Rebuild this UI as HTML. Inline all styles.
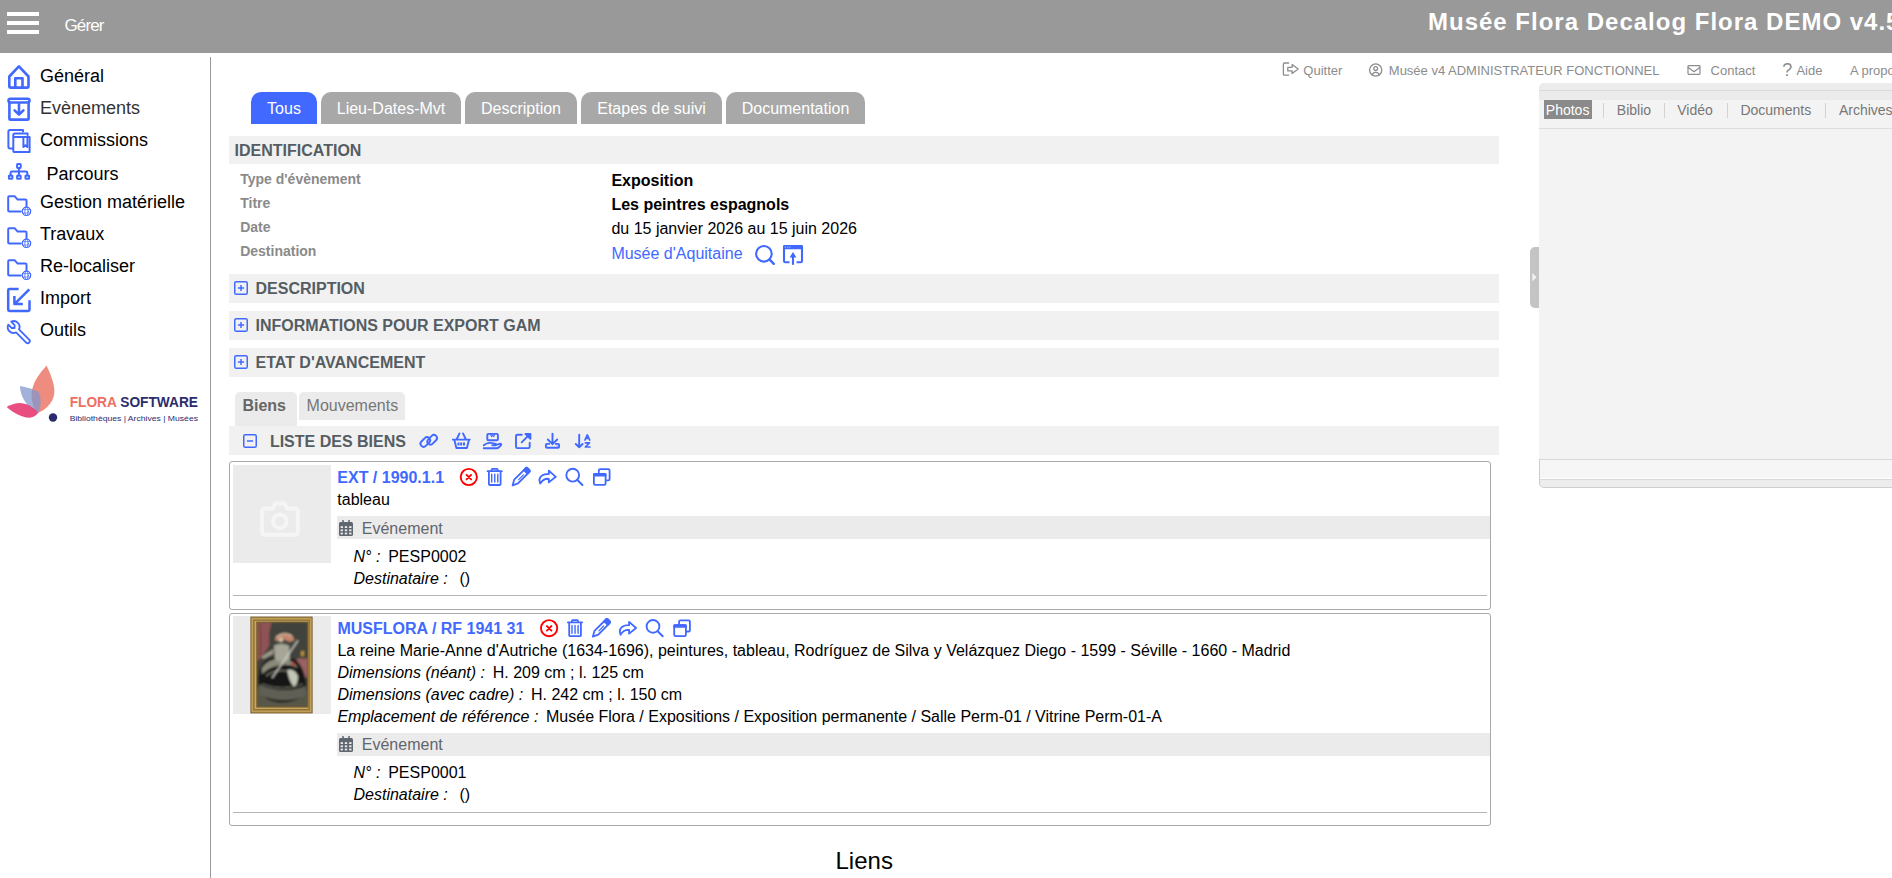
<!DOCTYPE html>
<html><head><meta charset="utf-8"><title>Flora</title><style>
html,body{margin:0;padding:0;}
body{width:1892px;height:878px;overflow:hidden;position:relative;background:#fff;font-family:"Liberation Sans",sans-serif;}
.t{position:absolute;line-height:1;white-space:pre;}
.r{position:absolute;}
svg.ov{position:absolute;left:0;top:0;width:1892px;height:878px;overflow:visible;}
</style></head><body>
<div class="r" style="left:0px;top:0px;width:1892px;height:53px;background:#999999;"></div>
<div class="r" style="left:7px;top:12px;width:32px;height:4px;background:#fff;"></div>
<div class="r" style="left:7px;top:21px;width:32px;height:4px;background:#fff;"></div>
<div class="r" style="left:7px;top:30px;width:32px;height:4px;background:#fff;"></div>
<div class="t" style="left:64.50px;top:16.71px;font-size:17px;color:#fff;font-weight:normal;font-style:normal;letter-spacing:-0.9px;">Gérer</div>
<div class="t" style="left:1428.00px;top:10.48px;font-size:24px;color:#fff;font-weight:bold;font-style:normal;letter-spacing:1px;">Musée Flora Decalog Flora DEMO v4.5</div>
<div class="r" style="left:210px;top:57px;width:1px;height:821px;background:#9a9a9a;"></div>
<div class="t" style="left:40.00px;top:67.36px;font-size:18px;color:#000;font-weight:normal;font-style:normal;">Général</div>
<div class="t" style="left:40.00px;top:99.46px;font-size:18px;color:#333;font-weight:normal;font-style:normal;">Evènements</div>
<div class="t" style="left:40.00px;top:131.36px;font-size:18px;color:#000;font-weight:normal;font-style:normal;">Commissions</div>
<div class="t" style="left:46.50px;top:164.76px;font-size:18px;color:#000;font-weight:normal;font-style:normal;">Parcours</div>
<div class="t" style="left:40.00px;top:193.36px;font-size:18px;color:#000;font-weight:normal;font-style:normal;">Gestion matérielle</div>
<div class="t" style="left:40.00px;top:225.16px;font-size:18px;color:#000;font-weight:normal;font-style:normal;">Travaux</div>
<div class="t" style="left:40.00px;top:257.06px;font-size:18px;color:#000;font-weight:normal;font-style:normal;">Re-localiser</div>
<div class="t" style="left:40.00px;top:288.96px;font-size:18px;color:#000;font-weight:normal;font-style:normal;">Import</div>
<div class="t" style="left:40.00px;top:320.86px;font-size:18px;color:#000;font-weight:normal;font-style:normal;">Outils</div>
<div class="t" style="left:1303.30px;top:63.80px;font-size:13px;color:#8c8c8c;font-weight:normal;font-style:normal;">Quitter</div>
<div class="t" style="left:1388.80px;top:63.80px;font-size:13px;color:#8c8c8c;font-weight:normal;font-style:normal;">Musée v4 ADMINISTRATEUR FONCTIONNEL</div>
<div class="t" style="left:1710.60px;top:63.80px;font-size:13px;color:#8c8c8c;font-weight:normal;font-style:normal;">Contact</div>
<div class="t" style="left:1782.30px;top:60.86px;font-size:18px;color:#8c8c8c;font-weight:normal;font-style:normal;">?</div>
<div class="t" style="left:1796.40px;top:63.80px;font-size:13px;color:#8c8c8c;font-weight:normal;font-style:normal;">Aide</div>
<div class="t" style="left:1850.00px;top:63.80px;font-size:13px;color:#8c8c8c;font-weight:normal;font-style:normal;">A propos</div>
<div class="r" style="left:1539px;top:83px;width:363px;height:376px;background:#f3f3f3;border-radius:5px 0 0 0;overflow:hidden;"><div class="r" style="left:0;top:0;width:100%;height:7px;background:#ececec;"></div><div class="r" style="left:0;top:7px;width:100%;height:1px;background:#dadada;"></div><div class="r" style="left:0;top:8px;width:100%;height:9px;background:#ebebeb;"></div><div class="r" style="left:0;top:45px;width:100%;height:1px;background:#dedede;"></div></div>
<div class="r" style="left:1539px;top:459px;width:400px;height:27px;border-left:1px solid #cdcdcd;border-top:1px solid #d8d8d8;border-bottom:1px solid #cfcfcf;border-bottom-left-radius:5px;background:#ededed;overflow:hidden;"><div class="r" style="left:0;top:0;width:100%;height:18px;background:#f6f6f6;"></div><div class="r" style="left:0;top:18px;width:100%;height:1px;background:#fff;"></div><div class="r" style="left:0;top:19px;width:100%;height:1px;background:#d9d9d9;"></div></div>
<div class="r" style="left:1530px;top:247px;width:9px;height:61px;background:#c4c4c4;border-radius:5px 0 0 5px;"></div>
<svg class="ov"><path d="M1532.3 273 L1536.6 277.2 L1532.3 281.4 Z" fill="#f2f2f2"/></svg>
<div class="r" style="left:1544px;top:100px;width:48px;height:19px;background:#8a8a8a;"></div>
<div class="t" style="left:1545.80px;top:103.25px;font-size:14px;color:#fff;font-weight:normal;font-style:normal;">Photos</div>
<div class="r" style="left:1603px;top:103px;width:1px;height:15px;background:#d2d2d2;"></div>
<div class="r" style="left:1664px;top:103px;width:1px;height:15px;background:#d2d2d2;"></div>
<div class="r" style="left:1727px;top:103px;width:1px;height:15px;background:#d2d2d2;"></div>
<div class="r" style="left:1825px;top:103px;width:1px;height:15px;background:#d2d2d2;"></div>
<div class="t" style="left:1616.80px;top:103.25px;font-size:14px;color:#777;font-weight:normal;font-style:normal;">Biblio</div>
<div class="t" style="left:1677.20px;top:103.25px;font-size:14px;color:#777;font-weight:normal;font-style:normal;">Vidéo</div>
<div class="t" style="left:1740.40px;top:103.25px;font-size:14px;color:#777;font-weight:normal;font-style:normal;">Documents</div>
<div class="t" style="left:1838.90px;top:103.25px;font-size:14px;color:#777;font-weight:normal;font-style:normal;">Archives</div>
<div class="r" style="left:251px;top:92px;width:66px;height:31px;padding-top:1px;background:#4169ff;border-radius:10px 10px 0 0;color:#fff;font-size:16px;line-height:32px;text-align:center;">Tous</div>
<div class="r" style="left:321px;top:92px;width:140px;height:31px;padding-top:1px;background:#a8a8a8;border-radius:10px 10px 0 0;color:#fff;font-size:16px;line-height:32px;text-align:center;">Lieu-Dates-Mvt</div>
<div class="r" style="left:465px;top:92px;width:112px;height:31px;padding-top:1px;background:#a8a8a8;border-radius:10px 10px 0 0;color:#fff;font-size:16px;line-height:32px;text-align:center;">Description</div>
<div class="r" style="left:581px;top:92px;width:141px;height:31px;padding-top:1px;background:#a8a8a8;border-radius:10px 10px 0 0;color:#fff;font-size:16px;line-height:32px;text-align:center;">Etapes de suivi</div>
<div class="r" style="left:726px;top:92px;width:139px;height:31px;padding-top:1px;background:#a8a8a8;border-radius:10px 10px 0 0;color:#fff;font-size:16px;line-height:32px;text-align:center;">Documentation</div>
<div class="r" style="left:229px;top:136px;width:1270px;height:28px;background:#f1f1f1;"></div>
<div class="t" style="left:234.60px;top:143.06px;font-size:16px;color:#555d63;font-weight:bold;font-style:normal;">IDENTIFICATION</div>
<div class="t" style="left:240.20px;top:172.35px;font-size:14px;color:#8a8a8a;font-weight:bold;font-style:normal;">Type d'évènement</div>
<div class="t" style="left:240.20px;top:195.95px;font-size:14px;color:#8a8a8a;font-weight:bold;font-style:normal;">Titre</div>
<div class="t" style="left:240.20px;top:219.55px;font-size:14px;color:#8a8a8a;font-weight:bold;font-style:normal;">Date</div>
<div class="t" style="left:240.20px;top:243.85px;font-size:14px;color:#8a8a8a;font-weight:bold;font-style:normal;">Destination</div>
<div class="t" style="left:611.40px;top:173.16px;font-size:16px;color:#000;font-weight:bold;font-style:normal;">Exposition</div>
<div class="t" style="left:611.40px;top:196.76px;font-size:16px;color:#000;font-weight:bold;font-style:normal;">Les peintres espagnols</div>
<div class="t" style="left:611.40px;top:220.96px;font-size:16px;color:#000;font-weight:normal;font-style:normal;">du 15 janvier 2026 au 15 juin 2026</div>
<div class="t" style="left:611.40px;top:245.56px;font-size:16px;color:#4169ff;font-weight:normal;font-style:normal;">Musée d'Aquitaine</div>
<div class="r" style="left:229px;top:274px;width:1270px;height:29px;background:#f1f1f1;"></div>
<div class="t" style="left:255.50px;top:281.26px;font-size:16px;color:#555d63;font-weight:bold;font-style:normal;">DESCRIPTION</div>
<div class="r" style="left:229px;top:311px;width:1270px;height:29px;background:#f1f1f1;"></div>
<div class="t" style="left:255.50px;top:318.26px;font-size:16px;color:#555d63;font-weight:bold;font-style:normal;">INFORMATIONS POUR EXPORT GAM</div>
<div class="r" style="left:229px;top:348px;width:1270px;height:29px;background:#f1f1f1;"></div>
<div class="t" style="left:255.50px;top:355.26px;font-size:16px;color:#555d63;font-weight:bold;font-style:normal;">ETAT D'AVANCEMENT</div>
<div class="r" style="left:235px;top:392px;width:62px;height:34px;background:#ebebeb;border-radius:5px 5px 0 0;"></div>
<div class="t" style="left:242.40px;top:398.16px;font-size:16px;color:#666;font-weight:bold;font-style:normal;">Biens</div>
<div class="r" style="left:299px;top:392px;width:106px;height:28px;background:#ebebeb;border-radius:5px 5px 0 0;"></div>
<div class="t" style="left:306.60px;top:398.16px;font-size:16px;color:#777;font-weight:normal;font-style:normal;">Mouvements</div>
<div class="r" style="left:229px;top:426px;width:1270px;height:29px;background:#f1f1f1;"></div>
<div class="t" style="left:269.90px;top:434.06px;font-size:16px;color:#555d63;font-weight:bold;font-style:normal;">LISTE DES BIENS</div>
<div class="r" style="left:229px;top:461px;width:1260px;height:147px;border:1px solid #a9a9a9;border-radius:3px;"></div>
<div class="r" style="left:233px;top:465px;width:98px;height:98px;background:#ebebeb;"></div>
<div class="t" style="left:337.30px;top:470.36px;font-size:16px;color:#4169ff;font-weight:bold;font-style:normal;">EXT / 1990.1.1</div>
<div class="t" style="left:337.30px;top:492.26px;font-size:16px;color:#000;font-weight:normal;font-style:normal;">tableau</div>
<div class="r" style="left:337px;top:516px;width:1153px;height:23px;background:#ebebeb;"></div>
<div class="t" style="left:361.80px;top:521.26px;font-size:16px;color:#5f666d;font-weight:normal;font-style:normal;">Evénement</div>
<div class="t" style="left:353.50px;top:548.76px;font-size:16px;color:#000;font-weight:normal;font-style:italic;">N° :</div>
<div class="t" style="left:388.20px;top:548.76px;font-size:16px;color:#000;font-weight:normal;font-style:normal;">PESP0002</div>
<div class="t" style="left:353.50px;top:571.26px;font-size:16px;color:#000;font-weight:normal;font-style:italic;">Destinataire :</div>
<div class="t" style="left:459.50px;top:571.26px;font-size:16px;color:#000;font-weight:normal;font-style:normal;">()</div>
<div class="r" style="left:233px;top:595px;width:1254px;height:1px;background:#b4b4b4;"></div>
<div class="r" style="left:229px;top:613px;width:1260px;height:211px;border:1px solid #a9a9a9;border-radius:3px;"></div>
<div class="r" style="left:233px;top:616px;width:98px;height:98px;background:#ebebeb;"></div>
<div class="t" style="left:337.40px;top:620.76px;font-size:16px;color:#4169ff;font-weight:bold;font-style:normal;">MUSFLORA / RF 1941 31</div>
<div class="t" style="left:337.40px;top:643.26px;font-size:16px;color:#000;font-weight:normal;font-style:normal;">La reine Marie-Anne d'Autriche (1634-1696), peintures, tableau, Rodríguez de Silva y Velázquez Diego - 1599 - Séville - 1660 - Madrid</div>
<div class="t" style="left:337.40px;top:665.26px;font-size:16px;color:#000;font-weight:normal;font-style:italic;">Dimensions (néant) :</div>
<div class="t" style="left:492.70px;top:665.26px;font-size:16px;color:#000;font-weight:normal;font-style:normal;">H. 209 cm ; l. 125 cm</div>
<div class="t" style="left:337.40px;top:687.26px;font-size:16px;color:#000;font-weight:normal;font-style:italic;">Dimensions (avec cadre) :</div>
<div class="t" style="left:531.00px;top:687.26px;font-size:16px;color:#000;font-weight:normal;font-style:normal;">H. 242 cm ; l. 150 cm</div>
<div class="t" style="left:337.40px;top:709.26px;font-size:16px;color:#000;font-weight:normal;font-style:italic;">Emplacement de référence :</div>
<div class="t" style="left:546.00px;top:709.26px;font-size:16px;color:#000;font-weight:normal;font-style:normal;">Musée Flora / Expositions / Exposition permanente / Salle Perm-01 / Vitrine Perm-01-A</div>
<div class="r" style="left:337px;top:733px;width:1153px;height:23px;background:#ebebeb;"></div>
<div class="t" style="left:361.80px;top:736.86px;font-size:16px;color:#5f666d;font-weight:normal;font-style:normal;">Evénement</div>
<div class="t" style="left:353.50px;top:765.26px;font-size:16px;color:#000;font-weight:normal;font-style:italic;">N° :</div>
<div class="t" style="left:388.20px;top:765.26px;font-size:16px;color:#000;font-weight:normal;font-style:normal;">PESP0001</div>
<div class="t" style="left:353.50px;top:786.86px;font-size:16px;color:#000;font-weight:normal;font-style:italic;">Destinataire :</div>
<div class="t" style="left:459.50px;top:786.86px;font-size:16px;color:#000;font-weight:normal;font-style:normal;">()</div>
<div class="r" style="left:233px;top:812px;width:1254px;height:1px;background:#b4b4b4;"></div>
<div class="t" style="left:835.50px;top:849.48px;font-size:24px;color:#000;font-weight:normal;font-style:normal;">Liens</div>
<svg class="ov"><g fill="none" stroke="#4169ff" stroke-width="2.6" stroke-linecap="round" stroke-linejoin="round"><path d="M9.3 76.5 L18.9 66.3 L28.5 76.5 V86.6 Q28.5 87.6 27.5 87.6 H10.3 Q9.3 87.6 9.3 86.6 Z"/><path d="M15.3 87.6 V78.2 H22.5 V87.6"/><rect x="8.5" y="98.7" width="21" height="3.8" rx="1.9"/><path d="M9.4 102.7 V118.4 Q9.4 119.6 10.6 119.6 H27.4 Q28.6 119.6 28.6 118.4 V102.7"/><path d="M19 103.5 V114.5 M14.6 110.3 L19 114.7 L23.4 110.3"/></g><g fill="none" stroke="#4169ff" stroke-width="2.0" stroke-linecap="round" stroke-linejoin="round"><path d="M23 131.5 V129.9 H10 Q8.4 129.9 8.4 131.5 V146.8 Q8.4 148.4 10 148.4 H12.8"/><path d="M27.6 135 V133.4 H14.9 Q13.3 133.4 13.3 135 V150.5 Q13.3 152.1 14.9 152.1 H29.6 V137.1 H13.3"/><path d="M23.4 137.1 V147 L25.4 145.2 L27.4 147 V137.1"/><rect x="17.1" y="163.9" width="3.6" height="4.0" rx="0.6"/><rect x="8.9" y="175.4" width="3.5" height="3.4" rx="0.6"/><rect x="17.1" y="175.4" width="3.6" height="3.4" rx="0.6"/><rect x="25.5" y="175.4" width="3.6" height="3.4" rx="0.6"/><path d="M18.9 168.8 V175.4 M10.6 175.4 V172.8 Q10.6 171.4 12 171.4 H25.9 Q27.3 171.4 27.3 172.8 V175.4"/></g><g transform="translate(0 0)" fill="none" stroke="#4169ff" stroke-linecap="round" stroke-linejoin="round"><path stroke-width="2" d="M20.8 211.6 H9.3 Q8.2 211.6 8.2 210.5 V197.3 Q8.2 196.2 9.3 196.2 H14.6 L17.6 199.6 H25.4 Q26.5 199.6 26.5 200.7 V206.5"/><circle cx="26.5" cy="211.3" r="4.2" stroke-width="1.2" fill="#fff"/><ellipse cx="26.5" cy="211.3" rx="1.7" ry="4.1" stroke-width="0.8"/><path d="M22.6 209.6 H30.4 M22.6 213 H30.4" stroke-width="0.7"/></g><g transform="translate(0 32)" fill="none" stroke="#4169ff" stroke-linecap="round" stroke-linejoin="round"><path stroke-width="2" d="M20.8 211.6 H9.3 Q8.2 211.6 8.2 210.5 V197.3 Q8.2 196.2 9.3 196.2 H14.6 L17.6 199.6 H25.4 Q26.5 199.6 26.5 200.7 V206.5"/><circle cx="26.5" cy="211.3" r="4.2" stroke-width="1.2" fill="#fff"/><ellipse cx="26.5" cy="211.3" rx="1.7" ry="4.1" stroke-width="0.8"/><path d="M22.6 209.6 H30.4 M22.6 213 H30.4" stroke-width="0.7"/></g><g transform="translate(0 64)" fill="none" stroke="#4169ff" stroke-linecap="round" stroke-linejoin="round"><path stroke-width="2" d="M20.8 211.6 H9.3 Q8.2 211.6 8.2 210.5 V197.3 Q8.2 196.2 9.3 196.2 H14.6 L17.6 199.6 H25.4 Q26.5 199.6 26.5 200.7 V206.5"/><circle cx="26.5" cy="211.3" r="4.2" stroke-width="1.2" fill="#fff"/><ellipse cx="26.5" cy="211.3" rx="1.7" ry="4.1" stroke-width="0.8"/><path d="M22.6 209.6 H30.4 M22.6 213 H30.4" stroke-width="0.7"/></g><g fill="none" stroke="#4169ff" stroke-width="2.5" stroke-linejoin="round"><path d="M18.6 289.1 H9.4 Q8.2 289.1 8.2 290.3 V309.8 Q8.2 311 9.4 311 H28.3 Q29.5 311 29.5 309.8 V300.2"/><path d="M29.3 289.3 L15 303.6 M14.4 296 V304.1 H22.8"/></g><g transform="translate(4.9 318.3) scale(0.97)" fill="none" stroke="#4169ff" stroke-width="1.9" stroke-linecap="round" stroke-linejoin="round"><path d="M7 10h3v-3l-3.5 -3.5a6 6 0 0 1 8 8l10.5 10.5a2 2 0 0 1 -3 3l-10.5 -10.5a6 6 0 0 1 -8 -8l3.5 3.5"/></g><g fill="none" stroke="#8c8c8c" stroke-width="1.3" stroke-linejoin="round" stroke-linecap="round"><path d="M1288.6 63 H1284.4 Q1283.4 63 1283.4 64 V74.2 Q1283.4 75.2 1284.4 75.2 H1288.6"/><path d="M1287.8 67.3 H1292.1 V64.6 L1298.2 69.1 L1292.1 73.6 V70.9 H1287.8 Z"/><circle cx="1375.7" cy="70" r="6.1"/><circle cx="1375.7" cy="68.6" r="1.9"/><path d="M1372.2 75 Q1372.9 72.4 1375.7 72.4 Q1378.5 72.4 1379.2 75"/><rect x="1688" y="65.6" width="12" height="8.7" rx="0.8" stroke-width="1.2"/><path d="M1688.3 67.6 L1694 71.8 L1699.7 67.6" stroke-width="1.2"/></g><g fill="none" stroke="#4169ff" stroke-width="2.1" stroke-linecap="round" stroke-linejoin="round"><circle cx="763.9" cy="253.8" r="7.8"/><path d="M769.6 259.6 L773.8 263.8" stroke-width="2.4"/><path d="M789.5 262.3 H785.2 Q784 262.3 784 261.1 V247 H802 V261.1 Q802 262.3 800.8 262.3 H796.5" stroke-linecap="butt"/><path d="M793 264.8 V256" stroke-linecap="butt"/></g><rect x="783" y="245" width="20" height="4.3" rx="1.2" fill="#4169ff"/><rect x="784.7" y="246.5" width="1.2" height="1.3" fill="#9db1ff"/><rect x="787" y="246.5" width="1.2" height="1.3" fill="#9db1ff"/><rect x="789.2" y="246.5" width="1.2" height="1.3" fill="#9db1ff"/><path d="M789.6 257.4 L793 252 L796.4 257.4 Z" fill="#4169ff"/><g fill="none" stroke="#4169ff" stroke-width="1.5"><rect x="234.75" y="281.75" width="12.5" height="12.5" rx="1.6"/><path d="M237.9 288 H244.1 M241 284.9 V291.1"/><rect x="234.75" y="318.75" width="12.5" height="12.5" rx="1.6"/><path d="M237.9 325 H244.1 M241 321.9 V328.1"/><rect x="234.75" y="355.75" width="12.5" height="12.5" rx="1.6"/><path d="M237.9 362 H244.1 M241 358.9 V365.1"/><rect x="243.75" y="434.75" width="12.5" height="12.5" rx="1.6"/><path d="M246.9 441 H253.1"/></g><g fill="none" stroke="#4169ff" stroke-width="1.9" stroke-linecap="round" stroke-linejoin="round"><rect x="419.8" y="438.9" width="11" height="6.2" rx="3.1" transform="rotate(-45 425.3 442)"/><rect x="426.7" y="436.7" width="11" height="6.2" rx="3.1" transform="rotate(-45 432.2 439.8)"/><path d="M459.5 433.4 L456.8 439 M463 433.4 L465.7 439 M452.8 439.6 H469.8 M454.5 440.6 L456.4 448 H466.9 L468.8 440.6"/><path d="M458.5 442.6 V445.6 M461.2 442.6 V445.6 M464 442.6 V445.6" stroke-width="2" stroke-linecap="butt"/><rect x="487.3" y="433.9" width="10.6" height="6.3" rx="1"/><path d="M490.6 434.2 L491.4 436.6 L492.6 435.4 L493.8 436.6 L494.6 434.2" stroke-width="1.1"/><path d="M483.8 445.3 Q486.8 442.6 490.4 442.9 Q493.6 443.2 495.6 443.8 Q497.4 444.6 495.8 445.2 H492.3 M483.8 448.3 H496.2 Q497.8 448.3 499.2 447 L501 445.2 Q501.7 444 500.3 443.7 L497.2 444.6"/><path d="M521.8 434.8 H517.3 Q516 434.8 516 436.1 V446.8 Q516 448.1 517.3 448.1 H528.4 Q529.7 448.1 529.7 446.8 V442.8"/><path d="M521.7 442.3 L528.6 435.4"/><path d="M525.4 433.9 H530.4 V438.9 Z" fill="#4169ff"/><path d="M549.2 443.9 H547 Q545.9 443.9 545.9 445 V446.8 Q545.9 447.8 547 447.8 H558 Q559.1 447.8 559.1 446.8 V445 Q559.1 443.9 558 443.9 H555.8"/><path d="M552.5 433.6 V444.2 M547.8 439.5 L552.5 444.2 L557.2 439.5"/><circle cx="557.1" cy="445.8" r="0.6" fill="#4169ff" stroke="none"/><path d="M579.2 434.6 V447.3 M575.8 444 L579.2 447.3 L582.6 444"/><path d="M584.9 440 L587.3 434.9 L589.7 440 M585.8 438.3 H588.8 M585.3 442.8 H589.5 L585.3 447 H589.9" stroke-width="1.7"/></g><g transform="translate(0 0)" fill="none" stroke-linecap="round" stroke-linejoin="round"><circle cx="468.8" cy="477" r="8.1" stroke="#ff0000" stroke-width="1.9"/><path d="M466.6 474.9 L471.1 479.4 M471.1 474.9 L466.6 479.4" stroke="#ff0000" stroke-width="1.9"/><g stroke="#4169ff" stroke-width="1.8"><path d="M487.6 471.2 H501.8 M491.6 471 V469.7 Q491.6 468.9 492.4 468.9 H496.9 Q497.7 468.9 497.7 469.7 V471"/><path d="M488.9 471.6 V484 Q488.9 485 489.9 485 H499.6 Q500.6 485 500.6 484 V471.6"/><path d="M491.7 474.2 V482 M494.75 474.2 V482 M497.8 474.2 V482" stroke-width="1.4"/><path d="M512.6 485.4 L514.2 479.6 L525.6 468.3 Q526.6 467.3 527.6 468.3 L529.3 470 Q530.3 471 529.3 472 L518 483.4 Z"/><path d="M525.6 468.3 Q526.6 467.3 527.6 468.3 L529.3 470 Q530.3 471 529.3 472 L527.5 473.7 L523.9 470.1 Z" fill="#4169ff"/><path d="M518.6 479.6 L523.4 474.8" stroke-width="1.2"/><path d="M540.2 483.6 Q538.2 478.2 542 475.6 Q544.6 473.8 548.8 474 V470.6 L555.8 476.8 L548.8 482.4 V478.8 Q543.4 478.4 540.2 483.6 Z"/><circle cx="572.7" cy="475.2" r="6.4" stroke-width="1.9"/><path d="M577.4 480 L582.4 485" stroke-width="2"/><path d="M598.8 472.6 V470.4 Q598.8 469.1 600.1 469.1 H608.3 Q609.6 469.1 609.6 470.4 V479 Q609.6 480.3 608.3 480.3 H606.5"/><rect x="593.9" y="473.9" width="11.7" height="11" rx="1.3"/></g><rect x="593" y="473.1" width="13.5" height="3.4" rx="1.2" fill="#4169ff"/></g><g transform="translate(80.3 151.2)" fill="none" stroke-linecap="round" stroke-linejoin="round"><circle cx="468.8" cy="477" r="8.1" stroke="#ff0000" stroke-width="1.9"/><path d="M466.6 474.9 L471.1 479.4 M471.1 474.9 L466.6 479.4" stroke="#ff0000" stroke-width="1.9"/><g stroke="#4169ff" stroke-width="1.8"><path d="M487.6 471.2 H501.8 M491.6 471 V469.7 Q491.6 468.9 492.4 468.9 H496.9 Q497.7 468.9 497.7 469.7 V471"/><path d="M488.9 471.6 V484 Q488.9 485 489.9 485 H499.6 Q500.6 485 500.6 484 V471.6"/><path d="M491.7 474.2 V482 M494.75 474.2 V482 M497.8 474.2 V482" stroke-width="1.4"/><path d="M512.6 485.4 L514.2 479.6 L525.6 468.3 Q526.6 467.3 527.6 468.3 L529.3 470 Q530.3 471 529.3 472 L518 483.4 Z"/><path d="M525.6 468.3 Q526.6 467.3 527.6 468.3 L529.3 470 Q530.3 471 529.3 472 L527.5 473.7 L523.9 470.1 Z" fill="#4169ff"/><path d="M518.6 479.6 L523.4 474.8" stroke-width="1.2"/><path d="M540.2 483.6 Q538.2 478.2 542 475.6 Q544.6 473.8 548.8 474 V470.6 L555.8 476.8 L548.8 482.4 V478.8 Q543.4 478.4 540.2 483.6 Z"/><circle cx="572.7" cy="475.2" r="6.4" stroke-width="1.9"/><path d="M577.4 480 L582.4 485" stroke-width="2"/><path d="M598.8 472.6 V470.4 Q598.8 469.1 600.1 469.1 H608.3 Q609.6 469.1 609.6 470.4 V479 Q609.6 480.3 608.3 480.3 H606.5"/><rect x="593.9" y="473.9" width="11.7" height="11" rx="1.3"/></g><rect x="593" y="473.1" width="13.5" height="3.4" rx="1.2" fill="#4169ff"/></g><path d="M262 511.5 Q262 508.4 265 508.4 H272.8 L274.4 505 Q275 503.3 276.8 503.3 H283 Q284.8 503.3 285.4 505 L287 508.4 H294.8 Q297.8 508.4 297.8 511.5 V531.7 Q297.8 534.7 294.8 534.7 H265 Q262 534.7 262 531.7 Z" fill="none" stroke="#f5f5f5" stroke-width="4" stroke-linejoin="round"/><circle cx="279.8" cy="521.3" r="6.8" fill="none" stroke="#f5f5f5" stroke-width="4"/><g transform="translate(0 0)" fill="#5f676e"><rect x="339" y="522" width="14" height="14" rx="1.6"/><rect x="342.3" y="520" width="1.5" height="3"/><rect x="348.3" y="520" width="1.5" height="3"/><rect x="340.6" y="526.2" width="2.4" height="1.8" fill="#ebebeb"/><rect x="340.6" y="529.4" width="2.4" height="1.8" fill="#ebebeb"/><rect x="340.6" y="532.6" width="2.4" height="1.8" fill="#ebebeb"/><rect x="344.8" y="526.2" width="2.4" height="1.8" fill="#ebebeb"/><rect x="344.8" y="529.4" width="2.4" height="1.8" fill="#ebebeb"/><rect x="344.8" y="532.6" width="2.4" height="1.8" fill="#ebebeb"/><rect x="349.1" y="526.2" width="2.4" height="1.8" fill="#ebebeb"/><rect x="349.1" y="529.4" width="2.4" height="1.8" fill="#ebebeb"/><rect x="349.1" y="532.6" width="2.4" height="1.8" fill="#ebebeb"/></g><g transform="translate(0 216)" fill="#5f676e"><rect x="339" y="522" width="14" height="14" rx="1.6"/><rect x="342.3" y="520" width="1.5" height="3"/><rect x="348.3" y="520" width="1.5" height="3"/><rect x="340.6" y="526.2" width="2.4" height="1.8" fill="#ebebeb"/><rect x="340.6" y="529.4" width="2.4" height="1.8" fill="#ebebeb"/><rect x="340.6" y="532.6" width="2.4" height="1.8" fill="#ebebeb"/><rect x="344.8" y="526.2" width="2.4" height="1.8" fill="#ebebeb"/><rect x="344.8" y="529.4" width="2.4" height="1.8" fill="#ebebeb"/><rect x="344.8" y="532.6" width="2.4" height="1.8" fill="#ebebeb"/><rect x="349.1" y="526.2" width="2.4" height="1.8" fill="#ebebeb"/><rect x="349.1" y="529.4" width="2.4" height="1.8" fill="#ebebeb"/><rect x="349.1" y="532.6" width="2.4" height="1.8" fill="#ebebeb"/></g><defs><filter id="pb" x="-5%" y="-5%" width="110%" height="110%"><feGaussianBlur stdDeviation="0.8"/></filter><clipPath id="pc"><rect x="257" y="622.3" width="50.7" height="84.4"/></clipPath></defs><g><rect x="250.4" y="616.6" width="62.2" height="96.8" fill="#6f5526"/><rect x="251.3" y="617.5" width="60.4" height="95" fill="#bf9d55"/><rect x="253.2" y="619.6" width="56.6" height="90.8" fill="#8f7036"/><rect x="254.6" y="620.8" width="53.8" height="88.2" fill="#c7a862"/><rect x="256.2" y="621.6" width="52.2" height="86" fill="#7a6332"/><g clip-path="url(#pc)"><g filter="url(#pb)"><rect x="257" y="622.3" width="50.7" height="84.4" fill="#3f423b"/><path d="M257 622.3 H272 Q268 632 269.5 645 Q266 652 262 656 L257 662 Z" fill="#8e5254"/><path d="M260 624 Q262 640 260 656" stroke="#6d3a3c" stroke-width="1" fill="none"/><path d="M296.9 658.5 H307.7 V677.2 H296.9 Z" fill="#9a6262"/><rect x="301" y="651" width="3" height="5" fill="#b8923e"/><path d="M257 688 V706.7 H307.7 V690 Z" fill="#58564a"/><path d="M258.3 686 Q257.5 668 266 660 Q280 653 296 660 Q306.5 670 306 690 Q300 702 282 702.5 Q262 702 258.3 686 Z" fill="#171816"/><path d="M258.5 684 Q282 695 306 686 L305.5 696 Q282 705 259.5 695 Z" fill="#5e5f55"/><path d="M262 684 Q282 692 303 684" stroke="#8a8a7e" stroke-width="0.8" fill="none"/><path d="M262 668 Q268 658 282 659 Q294 660 298 668 Q290 664 282 665 Q270 666 262 674 Z" fill="#8a8a7c"/><path d="M266 676 Q276 668 290 672" stroke="#77776a" stroke-width="1.2" fill="none"/><path d="M274 645.5 Q281 642 289 645.5 L290 660 Q282 663 275 660 Z" fill="#a6a596"/><path d="M274 649 Q266 653 261 657 L263.5 659 L273 654 Z" fill="#9c9b8c"/><path d="M274.6 640 Q277 633 285 633.5 Q293 633 294.5 640 Q290 643 286 640.5 Q282 637.5 278 641 Z" fill="#c4866a"/><path d="M276 637 Q284 631 292 636" stroke="#e0d2c0" stroke-width="1" fill="none"/><circle cx="281" cy="639.8" r="2.3" fill="#d2c0ab"/><path d="M287.2 670 Q294 668 298 676 Q298 684 294 686.8 Q289 682 287.2 670 Z" fill="#c2c6b6"/><circle cx="293.3" cy="664" r="1.7" fill="#c0372f"/><path d="M298 640.4 L272.1 677.8" stroke="#d6d6ce" stroke-width="1.2"/></g></g></g><path d="M46.6 365.5 C40 373 31.5 383 31.6 395 C31.7 405 35 411 38.3 412.7 C48 409 54.4 400 54.4 391.6 C54.4 383 50 373 46.6 365.5 Z" fill="#ef8c80"/><path d="M20 386 C20 397 28 409 38.3 412.7 C42 405 41 395 38 391.6 C33 389 26 387 20 386 Z" fill="#8197cd" fill-opacity="0.75"/><path d="M6.7 407 C14 413 22 418 30 417.7 C34 417 37 414.5 38.3 412.7 C33 407 27 403 19 403 C14 403.5 10 405 6.7 407 Z" fill="#e63f74" fill-opacity="0.92"/><circle cx="53" cy="417.5" r="4.2" fill="#2b2c6e"/><text x="69.7" y="406.6" font-family="Liberation Sans" font-weight="bold" font-size="14" textLength="128.3" lengthAdjust="spacingAndGlyphs"><tspan fill="#ec6f62">FLORA </tspan><tspan fill="#2b2c6e">SOFTWARE</tspan></text><text x="69.7" y="420.5" font-family="Liberation Sans" font-weight="normal" font-size="8" fill="#2b2c6e" textLength="128.3" lengthAdjust="spacingAndGlyphs">Bibliothèques | Archives | Musées</text></svg>
</body></html>
